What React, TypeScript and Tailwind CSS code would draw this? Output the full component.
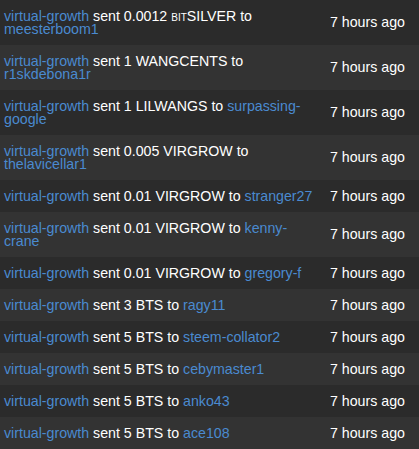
import React from "react";

type Transfer = {
    amount: string;
    asset: React.ReactNode;
    to: string;
};

const transfers: Transfer[] = [
    { amount: "0.0012", asset: <><span className="[font-variant-caps:small-caps]">bit</span>SILVER</>, to: "meesterboom1" },
    { amount: "1", asset: "WANGCENTS", to: "r1skdebona1r" },
    { amount: "1", asset: "LILWANGS", to: "surpassing-google" },
    { amount: "0.005", asset: "VIRGROW", to: "thelavicellar1" },
    { amount: "0.01", asset: "VIRGROW", to: "stranger27" },
    { amount: "0.01", asset: "VIRGROW", to: "kenny-crane" },
    { amount: "0.01", asset: "VIRGROW", to: "gregory-f" },
    { amount: "3", asset: "BTS", to: "ragy11" },
    { amount: "5", asset: "BTS", to: "steem-collator2" },
    { amount: "5", asset: "BTS", to: "cebymaster1" },
    { amount: "5", asset: "BTS", to: "anko43" },
    { amount: "5", asset: "BTS", to: "ace108" },
];

export default function App() {
    return (
        <div className="w-[419px] h-[449px] overflow-hidden bg-[#2b2b2b] font-['Liberation_Sans',Arial,sans-serif] text-[14.2px]">
            {transfers.map((t, i) => (
                <div
                    key={i}
                    className={`flex items-center ${i % 2 === 0 ? "bg-[#2b2b2b]" : "bg-[#333333]"}`}
                >
                    {/* sender / amount / receiver */}
                    <div className="w-[324px] shrink-0 pl-[4px] pr-[4px] py-[9.5px] leading-[13px] text-white">
                        <a className="text-[#4a8ad0]">virtual-growth</a> sent {t.amount} {t.asset} to{" "}
                        <a className="text-[#4a8ad0]">{t.to}</a>
                    </div>
                    <div className="pl-[6px] text-white whitespace-nowrap leading-[13px]">7 hours ago</div>
                </div>
            ))}
        </div>
    );
}
